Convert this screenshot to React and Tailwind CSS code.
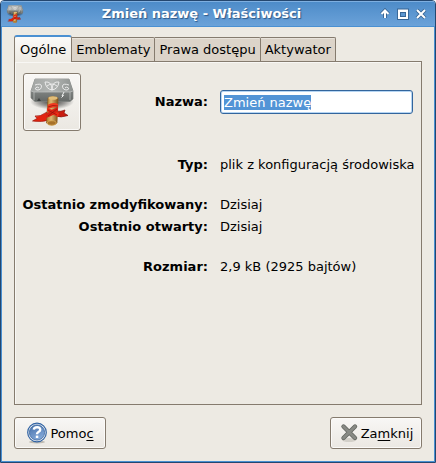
import { useEffect, useRef, useState } from "react";

function HammerIcon({ className, id }) {
  return (
    <svg viewBox="0 0 48 48" className={className} aria-hidden="true">
      <defs>
        <linearGradient id={id + "-top"} x1="0" y1="0" x2="1" y2="0">
          <stop offset="0" stopColor="#a2a5a3" />
          <stop offset="0.5" stopColor="#b3b6b4" />
          <stop offset="1" stopColor="#8f9391" />
        </linearGradient>
        <linearGradient id={id + "-side"} x1="0" y1="0" x2="0" y2="1">
          <stop offset="0" stopColor="#a0a3a1" />
          <stop offset="1" stopColor="#646866" />
        </linearGradient>
        <linearGradient id={id + "-wood"} x1="0" y1="0" x2="1" y2="0">
          <stop offset="0" stopColor="#b07c2e" />
          <stop offset="0.4" stopColor="#deb872" />
          <stop offset="1" stopColor="#805018" />
        </linearGradient>
        <radialGradient id={id + "-shade"}>
          <stop offset="0" stopColor="#000" stopOpacity="0.75" />
          <stop offset="0.6" stopColor="#000" stopOpacity="0.35" />
          <stop offset="1" stopColor="#000" stopOpacity="0" />
        </radialGradient>
      </defs>
      <ellipse cx="24" cy="23.5" rx="22" ry="8" fill={"url(#" + id + "-shade)"} />
      <path d="M7 1 H41 L45 13 V21 L42 23.5 H7 L3 20 V13 Z" fill={"url(#" + id + "-side)"} stroke="#7b7f7d" strokeWidth="0.7" />
      <path d="M7 1 H41 L45 13 L42 14 H6 L3 13 Z" fill={"url(#" + id + "-top)"} />
      <path d="M3 13 L6 14 H42 L45 13 M6 14 V22 M42 14 V22" stroke="#c3c6c4" strokeWidth="0.7" fill="none" />
      <path d="M9 23 L11 20 L13 23 Z" fill="#3f4241" />
      <path d="M36 14 L34 18 L35.5 17.5 L33.5 19.5" stroke="#f2f3f2" strokeWidth="1" fill="none" />
      <g fill="none" stroke="#f0f1f0" strokeWidth="0.9">
        <path d="M17 4 Q24 3 24 12 Q18 11 17 4 M31 4 Q24 3 24 12 Q30 11 31 4 M19 8 Q24 4 29 8" />
        <path d="M7 7 Q13 5 13.5 8 Q13.5 12 9 12 Q6 11 8 9.5 Q10 8.5 11 10 M41 7 Q35 5 34.5 8 Q34.5 12 39 12 Q42 11 40 9.5 Q38 8.5 37 10" />
      </g>
      <path d="M19 34 Q12 39 7 38 L9 40.5 L4.5 43 Q14 44.5 21 42 Z" fill="#e3240f" stroke="#9d160d" strokeWidth="0.7" />
      <path d="M28 33 Q33 34 37 32 L36 35 L40 37.5 Q33 40 27 38 Z" fill="#c91d10" stroke="#88120b" strokeWidth="0.7" />
      <path d="M20 20 Q24 17 30 20 L29 45 Q24 49 18.5 45 Z" fill={"url(#" + id + "-wood)"} stroke="#885a1c" strokeWidth="0.7" />
      <ellipse cx="25" cy="20" rx="4.6" ry="1.8" fill="#e1bd78" />
      <ellipse cx="23.8" cy="45" rx="4.4" ry="2.2" fill="#a8722a" stroke="#e0b15a" strokeWidth="0.7" />
      <path d="M19.5 27 Q25 23.5 30 26 V29 Q26 28.5 20 31 Z" fill="#ef3a1f" />
      <path d="M19 30 Q26 32 31 35 L30 39 Q23 36 19 33 Z" fill="#ee2c16" />
      <path d="M30 29 Q24 31 18 36 V40 Q25 38 30 33 Z" fill="#d92112" />
      <path d="M20 29 Q25 26.5 30 28 M20 32 L29 37 M29 31 L20 38" fill="none" stroke="#92130b" strokeWidth="0.7" />
    </svg>
  );
}

function HelpIcon() {
  return (
    <svg viewBox="0 0 22 22" className="size-[22px]" aria-hidden="true">
      <defs>
        <linearGradient id="help-fill" x1="0" y1="0" x2="0.5" y2="1">
          <stop offset="0" stopColor="#456fa9" />
          <stop offset="1" stopColor="#83a8d8" />
        </linearGradient>
      </defs>
      <ellipse cx="11" cy="20" rx="8" ry="1.5" fill="#bdbab2" />
      <circle cx="11" cy="10.5" r="9.3" fill="#e8edf4" stroke="#3465a4" strokeWidth="1.2" />
      <circle cx="11" cy="10.5" r="7.6" fill="url(#help-fill)" stroke="#3b679f" strokeWidth="0.8" />
      <path d="M7.8 7.6 Q8 5.2 11.2 5.2 Q14.3 5.2 14.2 7.8 Q14.1 9.1 12.4 10 Q11 10.8 11 12.2" fill="none" stroke="#fff" strokeWidth="2.4" />
      <rect x="9.8" y="13.6" width="2.5" height="2.4" fill="#fff" />
    </svg>
  );
}

function CloseIcon() {
  return (
    <svg viewBox="0 0 20 20" className="size-5" aria-hidden="true">
      <ellipse cx="10" cy="17" rx="7" ry="2" fill="#d3d0c9" />
      <path d="M4.5 3.5 L16 15 M16 3.5 L4.5 15" stroke="#636661" strokeWidth="4.4" strokeLinecap="round" />
      <path d="M4.5 3.5 L16 15 M16 3.5 L4.5 15" stroke="#888a85" strokeWidth="2.8" strokeLinecap="round" />
    </svg>
  );
}

const windowControls = [
  { name: "Zwiń", path: "M6 10 V3 M2.5 6 L6 2.5 L9.5 6" },
  { name: "Maksymalizuj", path: "M2 2.5 H10 V10 H2 Z M2 3 H10" },
  { name: "Zamknij okno", path: "M2 2 L10 10 M10 2 L2 10" },
];

const tabs = ["Ogólne", "Emblematy", "Prawa dostępu", "Aktywator"];

const details = [
  { label: "Typ:", value: "plik z konfiguracją środowiska", space: "mt-6" },
  { label: "Ostatnio zmodyfikowany:", value: "Dzisiaj", space: "mt-5" },
  { label: "Ostatnio otwarty:", value: "Dzisiaj", space: "mt-0.5" },
  { label: "Rozmiar:", value: "2,9 kB (2925 bajtów)", space: "mt-5" },
];

const raised =
  "rounded-[3px] border border-[#857b6e] bg-linear-to-b from-[#f8f7f5] to-[#ebe8e2] shadow-[inset_0_0_0_1px_#fbfaf8]";

export default function App() {
  const nameRef = useRef(null);
  const [name, setName] = useState("Zmień nazwę");

  useEffect(() => {
    nameRef.current.focus();
    nameRef.current.select();
  }, []);

  return (
    <main className="flex min-h-screen flex-col overflow-hidden rounded-t-[4px] border border-[#24476f] bg-[#edeae3] font-['DejaVu_Sans',sans-serif] text-[13px] leading-5 text-black">
      <header className="flex h-[26px] items-center border-b border-[#4a90d2] bg-linear-to-b from-[#4c8bc8] to-[#6ba2d9] pt-px pr-2 pl-[5px] shadow-[inset_0_1px_0_#7eafe0]">
        <HammerIcon id="title" className="size-[18px]" />
        <h1 className="flex-1 text-center font-bold text-white [text-shadow:1px_1px_1px_#2d5887]">Zmień nazwę - Właściwości</h1>
        <div className="flex gap-[6px]">
          {windowControls.map((control) => (
            <button key={control.name} type="button" aria-label={control.name}>
              <svg viewBox="0 0 12 12" className="size-3" fill="none">
                <path d={control.path} stroke="#376594" strokeWidth="3.8" />
                <path d={control.path} stroke="#fff" strokeWidth="2" />
              </svg>
            </button>
          ))}
        </div>
      </header>

      <div className="flex flex-1 flex-col border-x border-b border-[#4a90d2] px-3 pt-2 pb-3">
        <div role="tablist" className="relative z-10 -mb-px flex items-end">
          {tabs.map((tab, index) => (
            <button
              key={tab}
              type="button"
              role="tab"
              aria-selected={index === 0}
              className={
                index === 0
                  ? "h-[27px] rounded-t-[3px] border-x border-t-2 border-x-[#857b6e] border-t-[#4a90d2] bg-linear-to-b from-[#fbfaf8] to-[#edeae3] px-[5px] pt-px"
                  : "mb-px h-6 rounded-tr-[2px] border-t border-r border-[#857b6e] bg-[#dcd4c9] px-1 pt-px shadow-[inset_0_1px_0_#e8e3db]"
              }
            >
              {tab}
            </button>
          ))}
        </div>

        <section role="tabpanel" className="flex-1 border border-[#857b6e] px-2 pt-[11px] shadow-[inset_1px_1px_0_#f8f7f4]">
          <div className="grid grid-cols-[185px_1fr] items-center gap-x-3">
            <div className="flex items-center justify-between">
              <button type="button" aria-label="Ikona" className={"flex size-[58px] items-center justify-center " + raised}>
                <HammerIcon id="file" className="size-12" />
              </button>
              <label htmlFor="file-name" className="font-bold">Nazwa:</label>
            </div>
            <input
              id="file-name"
              ref={nameRef}
              value={name}
              onChange={(event) => setName(event.target.value)}
              className="h-6 w-full min-w-0 rounded-[3px] border border-[#33659c] bg-white px-[3px] leading-4 shadow-[inset_0_0_0_1px_#b5d5f3] outline-none selection:bg-[#5294d6] selection:text-white"
            />
          </div>
          <dl>
            {details.map((item) => (
              <div key={item.label} className={"grid grid-cols-[185px_1fr] gap-x-3 " + item.space}>
                <dt className="flex justify-end font-bold whitespace-nowrap">{item.label}</dt>
                <dd className="whitespace-nowrap">{item.value}</dd>
              </div>
            ))}
          </dl>
        </section>

        <footer className="mt-3 flex justify-between">
          <button type="button" className={"flex h-8 w-[92px] items-center justify-center gap-0.5 " + raised}>
            <HelpIcon />
            <span className="pt-px">Pomo<u className="underline-offset-2">c</u></span>
          </button>
          <button type="button" className={"flex h-8 w-[92px] items-center justify-center gap-0.5 " + raised}>
            <CloseIcon />
            <span className="pt-px">Za<u className="underline-offset-2">m</u>knij</span>
          </button>
        </footer>
      </div>
    </main>
  );
}
